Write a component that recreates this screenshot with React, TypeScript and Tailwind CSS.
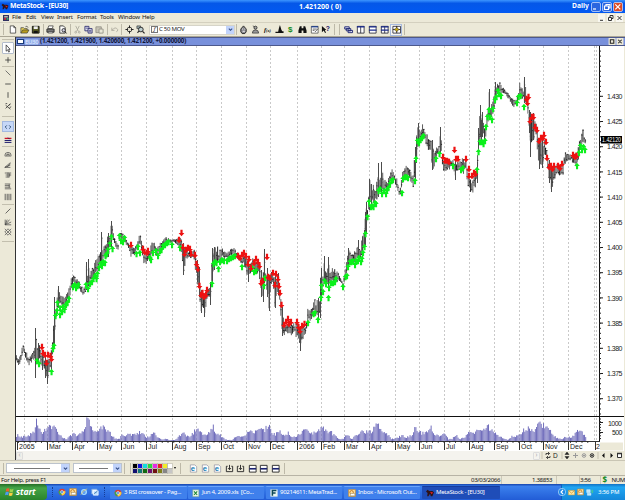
import React from "react";

/* ---------- chart data: [x, high, low] ---------- */
const PRICE: number[][] = [
  [16,353,360],[18,358,367],[20,356,364],[22,347,358],[23.5,343,353],[25,348,356],[27,352,363],[29,357,366],[31,352,364],[33,348,361],[35,346,362],[35.7,328,378],[36.6,345,362],[38,343,367],[40,345,364],[42,350,370],[44,354,372],[45.5,357,378],[47.2,360,384],[49,354,372],[51,351,373],[53,337,353],[54.6,297,345],[55.6,310,325],[57,298,313],[58.5,286,308],[61,294,308],[64,296,310],[67,293,305],[70,285,297],[72,273,290],[73.5,271,284],[76,277,287],[79,280,288],[81,286,293],[83.5,288,297],[85.5,283,292],[86.5,262,290],[87.5,278,288],[88.5,259,286],[89.5,275,284],[92,268,282],[95,262,278],[98,254,270],[100.5,250,266],[101.5,232,267],[102.5,248,262],[105,243,260],[108,233,257],[110,235,250],[111.5,221,247],[113,228,240],[114.6,237,244],[116,240,248],[118,244,252],[119.5,230,241],[122,231,240],[125,235,243],[128,242,248],[131,245,258],[134,248,257],[137,240,253],[139.5,233,246],[142,240,252],[143.8,250,267],[147,253,263],[150,248,260],[153.5,237,254],[157,247,257],[160,243,253],[163,240,248],[166,236,245],[170,239,243],[175,239,243],[180,237,248],[183.5,243,275],[186,248,261],[190,250,260],[194,248,260],[197,260,282],[199,267,297],[201,290,313],[203,292,306],[204.5,294,317],[207,290,303],[209,286,295],[210.5,282,305],[212,248,283],[214,247,270],[217.5,246,264],[219,252,264],[221.5,245,260],[225,251,260],[229,250,258],[233.5,246,256],[237,252,259],[240,255,262],[243,256,265],[246,255,270],[248,260,282],[250,259,278],[253,257,270],[256,262,276],[259,260,275],[261,270,297],[263,273,302],[264.5,249,283],[265.5,272,284],[267,268,297],[269.5,275,311],[271,272,286],[273,271,282],[275,272,308],[278,273,293],[280,288,307],[282,307,336],[285,322,335],[290,322,337],[294,322,332],[297,323,340],[300,327,351],[303,325,340],[306,324,335],[308,307,324],[311,309,320],[314,297,314],[316,302,315],[318,298,320],[320,296,318],[321,268,300],[323,275,288],[324.5,256,283],[326,276,290],[328.5,257,288],[330,273,286],[332,265,283],[336,270,283],[340,275,282],[343,282,287],[346,263,277],[348.5,248,268],[351,253,264],[353,252,263],[356,250,263],[358,240,260],[360,250,260],[362,237,258],[364,230,250],[365.5,212,245],[366.5,202,233],[368,205,222],[369.5,179,210],[371.5,184,207],[374,185,203],[376,188,202],[378.5,163,197],[380,182,193],[381.5,162,193],[384,178,190],[387,180,192],[390,173,187],[391.5,165,183],[394,173,182],[397,178,190],[399.5,192,197],[402,173,190],[403,168,183],[405.5,164,178],[409,168,178],[412,173,187],[413.5,175,188],[415,147,180],[416.3,137,163],[418.5,123,143],[420,128,140],[422,123,140],[425,130,142],[428,135,150],[431,137,153],[432.5,140,170],[434,153,172],[437,146,157],[439,143,154],[440.5,127,153],[442,148,160],[443,157,173],[446,158,173],[449,158,170],[452,158,168],[455,160,180],[456.5,163,173],[460,158,170],[463,158,175],[466,157,172],[468,172,190],[470,177,193],[472,178,195],[475,172,190],[477,162,183],[478.5,128,150],[480.5,105,137],[481.5,120,140],[482.5,112,137],[485,125,142],[488,107,125],[489.5,89,120],[490.5,105,118],[492,103,117],[494,95,110],[495.5,82,103],[497,84,97],[499.5,80,93],[502,85,95],[506,90,95],[510,95,102],[514,100,108],[516,98,106],[518,93,103],[519.5,82,98],[522,88,99],[523.5,90,100],[524.5,77,103],[527,97,110],[529.5,110,133],[530.8,112,157],[533,113,140],[536,120,138],[539,138,169],[542,139,168],[545,140,158],[547,150,162],[549,160,183],[551.5,166,192],[554,165,183],[557,164,175],[560,163,176],[563,162,181],[564.5,150,167],[568,153,163],[571,154,161],[574,153,166],[577,152,168],[579,140,157],[580.5,136,152],[582.5,126,143],[584,134,145],[586,136,148],
];

/* ---------- volume: [x, height] ---------- */
const VOLUME: number[][] = [
  [16,3],[17.5,8],[20,4],[24,5],[27,4],[31,8],[34,10],[36.5,21],[38,14],[42,8],[46,13],[49.5,17],[52,12],[55,17],[58,9],[62,4],[66,2],[70,5],[73,9],[77,5],[80,8],[84,14],[86,20],[88.5,22],[91,13],[94,8],[97,12],[100,12],[103,15],[106,12],[110,8],[114,3],[119,2],[122,7],[125,4],[129,8],[133,6],[138,9],[143,9],[145,4],[149,4],[153,9],[157,4],[161,2],[166,2],[170,1],[175,1],[180,6],[183,10],[186,5],[190,5],[194,10],[198,12],[202,7],[206,8],[210,10],[212.5,16],[215,8],[219,7],[223,3],[227,1],[232,1],[236,5],[241,4],[245,6],[248,9],[252,11],[256,9],[260,12],[264,11],[268,18],[271,9],[275,7],[280,10],[284,5],[288,9],[292,4],[297,6],[301,9],[305,11],[310,9],[315,8],[319,12],[321.5,17],[325,11],[330,10],[334,6],[338,2],[343,2],[347,8],[351,2],[356,6],[360,10],[365,10],[369,9],[373,12],[376,18],[379,14],[382,9],[387,8],[391,2],[396,3],[402,6],[405,3],[409,5],[413,7],[415,15],[419,9],[424,8],[428,11],[431,14],[435,7],[440,5],[444,8],[448,2],[452,2],[455,7],[459,2],[464,4],[469,9],[474,9],[478,11],[482,11],[486,17],[490,13],[494,10],[498,5],[503,3],[507,1],[512,5],[516,5],[520,7],[524,12],[529,15],[533,10],[537,16],[541,17],[545,14],[549,12],[553,6],[557,3],[561,2],[565,4],[569,4],[573,5],[577,10],[581,12],[584,6],[586,3],
];

const BUY: number[][] = [
  [37,361],[39,364],[51.5,372],[53,349],[54,346],[55.5,316],[57,311],[57.5,303],[60,315],[60,308],[62,312],[63,307],[64.5,310],[66,305],[67.5,303],[69,299],[73,287],[74.5,285],[76,288],[77.5,286],[78.5,285],[86,285],[88,289],[90,284],[92,282],[93.5,279],[95,276],[96.5,279],[97.5,274],[99,268],[100.5,264],[102,266],[103,262],[105,263],[105.5,256],[107,254],[108,250],[110,244],[111.5,237],[112.5,249],[119.5,236],[121,241],[123,242],[124.5,238],[136.5,254],[138,247],[140,253],[150,258],[151,260],[153,253],[156,251],[158,256],[160,251],[161.5,250],[163,246],[165,245],[167,243],[168.5,242],[172,245],[180,248],[212,284],[213.5,264],[215,262],[216.5,263],[218.5,269],[220,262],[222,260],[224,261],[227,261],[229,259],[231,258],[233,257],[235,256],[242,267],[252,268],[254,272],[256,271],[264,286],[265,278],[308,323],[313.5,314],[315,313],[318,320],[321,298],[321.5,286],[323,292],[324.5,281],[326,284],[328.5,298],[329,288],[331,283],[333,283],[335,282],[336,279],[343,287],[345.5,277],[347,276],[348,267],[350,262],[351.5,262],[353,261],[355,265],[356,261],[358,261],[359,258],[361,262],[362,259],[363,253],[364.5,247],[365.5,234],[367.5,217],[369,202],[371,207],[372,206],[373.5,207],[375,203],[376,204],[378.5,191],[380,189],[382,194],[384,191],[386,194],[387,190],[388.5,188],[390,184],[391.5,181],[393,180],[402,193],[403,179],[405,177],[406.5,177],[408,178],[415,181],[416,159],[417.5,141],[419,143],[420.5,140],[422,138],[423.5,136],[436,159],[439.5,154],[453,166],[461,170],[463,168],[477,170],[478.5,152],[480,142],[482,142],[483.5,144],[485,141],[486,127],[487.5,117],[489,110],[490,117],[492,120],[493,109],[495,100],[496.5,97],[498,91],[499,94],[501,96],[517,103],[518.5,97],[520.5,96],[524,107],[577,166],[579,153],[580.5,146],[582,150],[583.5,147],[585,150],
];

const SELL: number[][] = [
  [42,347],[43,353],[45,355],[46.5,363],[48,355],[50.5,356],[51.5,359],[131,245],[143,249],[144.5,252],[147,253],[148,251],[179,240],[181.5,233],[183,247],[184.5,254],[186,250],[188,248],[190,249],[191,254],[195,255],[196.5,264],[198,269],[199.5,286],[201,295],[202.5,293],[204,297],[206,295],[207,290],[238,256],[240,258],[242,255],[244,253],[246,256],[248,264],[249,259],[251,268],[254,263],[256,259],[258,262],[259.5,266],[261,283],[262.5,281],[267,257],[268,277],[270,278],[273,273],[275,285],[276,274],[278,279],[279,286],[280,293],[281.5,305],[284,325],[286,322],[288,319],[289,324],[291,322],[297,322],[298.5,327],[300,331],[302,326],[304.5,324],[443,157],[445,161],[447,161],[449,162],[454.5,150],[456,159],[458,159],[466,159],[469,169],[469,176],[472,176],[474,173],[475.5,174],[526.5,99],[527.5,103],[528.5,97],[530,121],[532,117],[533.5,117],[535,127],[537,130],[539,141],[541,138],[543,138],[544,135],[546,142],[547,158],[549,167],[551,166],[552.5,169],[554,166],[558,166],[560,168],[562,164],[573,155],[575,157],[576.5,156],
];

const MONTHS: [number, string][] = [
  [17,"2065"],[47,"Mar"],[72,"Apr"],[97,"May"],[121,"Jun"],[146,"Jul"],[172,"Aug"],[196,"Sep"],[221,"Oct"],[246,"Nov"],[270,"Dec"],[297,"2066"],[321,"Feb"],[344,"Mar"],[369,"Apr"],[395,"May"],[419,"Jun"],[444,"Jul"],[469,"Aug"],[494,"Sep"],[519,"Oct"],[543,"Nov"],[568,"Dec"],[595,"2"],
];
const GRID = [24,47,72,97,121,146,172,196,221,246,270,297,321,344,369,395,419,444,469,494,519,543,568,594,596];

const rand = (n: number) => {
  const v = Math.sin(n * 127.1 + 11.7) * 43758.5453;
  return v - Math.floor(v);
};

function sample(points: number[][], x: number): number[] {
  let i = 0;
  while (i < points.length - 2 && points[i + 1][0] < x) i++;
  const a = points[i];
  const b = points[i + 1];
  const t = Math.max(0, Math.min(1, (x - a[0]) / (b[0] - a[0])));
  return a.slice(1).map((v, k) => v + (b[k + 1] - v) * t);
}

function Chart() {
  const bars: React.ReactNode[] = [];
  const vols: React.ReactNode[] = [];
  for (let i = 0; i < 487; i++) {
    const x = 16.2 + i * 1.171;
    const [h, l] = sample(PRICE, x);
    const range = l - h;
    const top = h + rand(i) * range * 0.34;
    const bot = l - rand(i + 900) * range * 0.34;
    bars.push(<path key={i} d={`M${x} ${top}V${bot}`} stroke={i % 4 === 0 ? "#262626" : "#5c5c5c"} strokeWidth="1" />);
    bars.push(<path key={"c" + i} d={`M${x - 0.4} ${top + (bot - top) * rand(i + 50)}h1.2`} stroke="#111" strokeWidth=".8" />);
    const [v] = sample(VOLUME, x);
    const vh = Math.max(1, v * (0.72 + rand(i + 300) * 0.45));
    vols.push(<path key={i} d={`M${x + 0.4} ${441 - vh}V441`} stroke="#716ebc" strokeWidth="1" />);
  }
  const spikes = PRICE.filter((p) => p[2] - p[1] > 19);
  const ticks: React.ReactNode[] = [];
  for (let i = 0; i < 73; i++) {
    const y = 51.1 + i * 5.04;
    if (y < 414) ticks.push(<path key={i} d={`M599 ${y}h2`} stroke="#222" strokeWidth="1" />);
  }
  return (
    <svg className="block h-[405px] w-[609px] shrink-0" viewBox="16 46 609 405" fontFamily="'Liberation Sans', Arial, sans-serif">
      <rect x="16" y="46" width="609" height="405" fill="#fff" />
      <g stroke="#c9c9c9" strokeWidth="1" strokeDasharray="2 2">
        {GRID.map((x) => <path key={x} d={`M${x + 0.5} 46V441`} />)}
      </g>
      <g>{bars}</g>
      <g stroke="#4c4c4c" strokeWidth="1">
        {spikes.map((p, i) => <path key={i} d={`M${Math.floor(p[0]) + 0.5} ${p[1]}V${p[2]}`} />)}
      </g>
      <g fill="#0bf01b">
        {BUY.map(([x, y], i) => <path key={i} d={`M${x} ${y - 3.2}l2.8 3.3h-1.7v3.2h-2.1v-3.2h-1.8z`} />)}
      </g>
      <g fill="#ed1111">
        {SELL.map(([x, y], i) => <path key={i} d={`M${x} ${y + 3.3}l2.9-3.4h-1.8v-3.1h-2.2v3.1h-1.8z`} />)}
      </g>
      <g>{vols}</g>
      <path d="M16 416.5H624M599.5 46V441" stroke="#111" strokeWidth="1" />
      <path d="M16 441.5H600" stroke="#333" strokeWidth="1" />
      {ticks}
      <g stroke="#222" strokeWidth="1">
        {Array.from({ length: 8 }, (_, i) => <path key={i} d={`M599 ${419 + i * 2.8}h2`} />)}
        <path d="M599 422.5h4M599 432.5h4" />
        {Array.from({ length: 100 }, (_, i) => <path key={"w" + i} d={`M${18.5 + i * 5.75} 441v2`} strokeWidth=".8" />)}
      </g>
      <g fontSize="7" fill="#222">
        {Array.from({ length: 13 }, (_, i) => {
          const y = 96.3 + i * 25.2;
          return (
            <g key={i}>
              <path d={`M599 ${y}h4`} stroke="#222" strokeWidth="1" />
              <text x="607" y={y + 2.7} textLength="15.5">{(1.43 - i * 0.005).toFixed(3)}</text>
            </g>
          );
        })}
        <text x="608" y="425.5" textLength="14">1000</text>
        <text x="612" y="435" textLength="10.5">500</text>
        <rect x="601" y="136" width="21" height="7.5" fill="#000" />
        <text x="602" y="142.3" fontSize="6.6" textLength="19" lengthAdjust="spacingAndGlyphs" fill="#fff">1.42120</text>
      </g>
      <g fontSize="7" fill="#222">
        {MONTHS.map(([x, label]) => (
          <g key={x}>
            <path d={`M${x + 0.5} 441v9`} stroke="#333" strokeWidth="1" />
            <text x={x + (label === "2" ? 1 : 2)} y="449.4">{label}</text>
          </g>
        ))}
      </g>
      <path d="M600 442.5h23v8h-23z" fill="#ece9d8" />
      <path d="M624 46h1v405h-1z" fill="#ece9d8" />
    </svg>
  );
}

/* ---------- 10×10 toolbar glyphs ---------- */
const GLYPHS: Record<string, React.ReactNode> = {
  page: <path d="M2.5 1h4l2 2v6h-6zM6.5 1v2h2" fill="#fff" stroke="#333" strokeWidth=".8" />,
  open: <><path d="M1 9V3h3l1 1h3v2" fill="#e8d458" stroke="#444" strokeWidth=".8" /><path d="M1 9l2-3.5h7L8 9z" fill="#b99c1c" stroke="#333" strokeWidth=".7" /><path d="M6 2q2-2 3 1" stroke="#333" fill="none" strokeWidth=".7" /></>,
  save: <><path d="M1.5 1.5h7.5v7.5h-7.5z" fill="#555a20" stroke="#111" /><path d="M3 1.5h4.5v3H3z" fill="#eee" /><path d="M3 6.5h4.5V9H3z" fill="#111" /></>,
  print: <><path d="M3 1h5l-1 3H2z" fill="#fff" stroke="#333" strokeWidth=".8" /><path d="M1 4.5h8v3.5H1z" fill="#777" stroke="#222" strokeWidth=".9" /><path d="M2.5 7.5h5V9h-5z" fill="#ddd" stroke="#222" strokeWidth=".6" /></>,
  preview: <><path d="M2 1h4l2 2v6H2z" fill="#fff" stroke="#222" strokeWidth=".9" /><circle cx="6.3" cy="5.8" r="1.9" fill="#ccd" stroke="#222" strokeWidth=".9" /><path d="M7.6 7.2L9.5 9.4" stroke="#222" /></>,
  cut: <path d="M3 1l3 6M7 1L4 7M3 7a1 1 0 100 2 1 1 0 000-2M7 7a1 1 0 100 2 1 1 0 000-2" fill="none" stroke="#aaa79b" strokeWidth=".9" />,
  copy: <><path d="M1 1.5h4.5v5H1z" fill="#dde" stroke="#226" strokeWidth=".9" /><path d="M4.5 4h4.5v5H4.5z" fill="#dde" stroke="#226" strokeWidth=".9" /><path d="M2 3.5h2.5M5.5 6h2.5M5.5 7.5h2.5" stroke="#226" strokeWidth=".7" /></>,
  paste: <><path d="M1 2h6v6.5H1z" fill="#c5c2b5" stroke="#929085" strokeWidth=".9" /><path d="M4.5 4.5H9V9H4.5z" fill="#ece9d8" stroke="#929085" strokeWidth=".9" /></>,
  undo: <path d="M2 3v3h3M2 6q4-5 6.5-1Q9 7 7 7.5" fill="none" stroke="#aaa79b" strokeWidth=".9" />,
  target: <><circle cx="5" cy="5" r="2.6" fill="none" stroke="#222" strokeWidth=".9" /><path d="M5 .5v3M5 6.5v3M.5 5h3M6.5 5h3" stroke="#222" strokeWidth="1.1" /></>,
  zoom: <><path d="M1 1h4v3H1z" fill="#9aa" stroke="#333" strokeWidth=".7" /><circle cx="5.4" cy="5" r="2.6" fill="#bcc" stroke="#222" /><path d="M7.3 7L9.5 9.3M1.5 8.5l2-1.5" stroke="#222" strokeWidth="1.3" /></>,
  explorer: <><path d="M2 4.500l3-3.500 3 3.500v3l-1.500 2h-3L2 7.500z" fill="#8a8a90" stroke="#222" /><path d="M3.500 4.500h1M6 4.500h1M4 7h2.500" stroke="#fff" strokeWidth=".9" fill="none" /></>,
  expert: <><circle cx="5" cy="3" r="1.7" fill="#aaa" stroke="#222" strokeWidth=".9" /><path d="M1.5 9q0-3.5 3.5-3.5T8.5 9zM2 1l2 1" fill="#999" stroke="#333" strokeWidth=".8" /></>,
  indicator: <text x="0" y="8" fontSize="7" fontStyle="italic" fontWeight="bold" fontFamily="Liberation Serif, serif">f<tspan fontSize="4.5">(x)</tspan></text>,
  wizard: <path d="M5.5 0l1.5 5 1 2h1.5v2H.5V7.5h3L4.5 3z" fill="#111" />,
  dollar: <text x="2.3" y="8.3" fontSize="9" fontWeight="bold" fill="#168a22" fontFamily="Liberation Sans, sans-serif">$</text>,
  find: <path d="M2 1.5h2v2h2v-2h2L9.5 6v3H6V6H4v3H.5V6z" fill="#111" />,
  report: <><path d="M1.5 1.5h7.5V9H1.5z" fill="#fff" stroke="#444" strokeWidth=".8" /><path d="M1.5 2h7.5" stroke="#138" strokeWidth="1.3" /><path d="M3 4.5h4.5M3 6h2M5.5 7.8L9 4" stroke="#333" strokeWidth=".8" /></>,
  help: <><path d="M1 1v7l2-1.8L4.5 9l1-.5L4.3 5.6H6z" fill="#111" /><text x="5.2" y="6.7" fontSize="7.5" fontWeight="bold" fill="#116" fontFamily="Liberation Sans, sans-serif">?</text></>,
  cascade: <path d="M.8 2h5v2.500H.8zM2.500 4h5v2.500h-5zM4.500 6h5v2.500h-5z" fill="#dde" stroke="#1a2270" strokeWidth="1" />,
  cols: <><path d="M1.5 1.5h7.5V9H1.5zM5.2 1.5V9" fill="#fff" stroke="#223" strokeWidth=".9" /><path d="M1 2h8.5" stroke="#1a2a8c" strokeWidth="1.5" /></>,
  rows: <><path d="M1.5 1.5h7.5V9H1.5z" fill="#fff" stroke="#223" strokeWidth=".9" /><path d="M1 2h8.5M1 5.7h8.5" stroke="#1a2a8c" strokeWidth="1.5" /></>,
  tiles: <><path d="M1.5 1.5h7.5V9H1.5zM5.2 1.5V9" fill="#fff" stroke="#223" strokeWidth=".9" /><path d="M1 2h8.5M1 5.7h8.5" stroke="#1a2a8c" strokeWidth="1.5" /></>,
  star: <><path d="M1 1.5h8.5V9H1zM5.2 1V9M1 5h8" fill="#fff" stroke="#223" strokeWidth=".9" /><path d="M5.2 2l1 2 2.200 1-2.200 1-1 2-1-2-2.200-1 2.200-1z" fill="#c9a912" stroke="#222" strokeWidth=".5" /></>,
  pointer: <path d="M3.5 1v7l1.7-1.5L6.3 9l1-.5L6.2 6H8z" fill="#fff" stroke="#222" strokeWidth=".8" />,
  plus: <path d="M5 1.5v7M1.5 5h7" stroke="#333" />,
  back: <path d="M2 2l6 6" stroke="#555" />,
  slash: <path d="M2 8l6-6" stroke="#444" />,
  horiz: <path d="M1.5 5h7" stroke="#333" />,
  vert: <path d="M5 1.5v7" stroke="#333" />,
  cross: <path d="M2 2h2M2 4l6 5M8 2L2 8M6 4l2-1M7 7l2-1" stroke="#333" fill="none" />,
  arrows: <path d="M3.5 3l-2 2 2 2M6.5 3l2 2-2 2" fill="none" stroke="#246" strokeWidth="1.1" />,
  flag: <><path d="M.8 3h8.500" stroke="#c12" strokeWidth="1.6" /><path d="M.8 5.600h8.500M.8 8h8.500" stroke="#116" strokeWidth="1.200" /><path d="M5 2l2 2" stroke="#116" /></>,
  arc: <path d="M1 7a4 4 0 018 0M3 7a2 2 0 014 0M1 7.5h8M5 5v2" fill="none" stroke="#444" strokeWidth=".9" />,
  fan: <path d="M1 8l7-6M1 8l7-3M1 8h7M4 7.5L8 3" stroke="#444" strokeWidth=".9" />,
  fib: <path d="M1 2.5h8M2 5h7M2 7.5h5M5 2v6M7 3v4" stroke="#444" strokeWidth=".9" />,
  fib2: <path d="M1 2.5h7M1 4.5h6M1 6.5h7M1 8.5h8M6.5 3v4" stroke="#444" strokeWidth=".9" />,
  zones: <path d="M1.5 1v8M4 1v8M6.2 1v8M8.5 1v8" stroke="#444" />,
  gann: <path d="M1.5 8.5V2M1.5 8.5L4 2M1.5 8.5L7 2M1.5 8.5L9 5M1.5 8.5H9" stroke="#444" strokeWidth=".9" />,
  mesh: <path d="M1 1l8 8M5 1l4 4M1 5l4 4M9 1L1 9M5 1L1 5M9 5L5 9" stroke="#555" strokeWidth=".9" />,
  web: <><path d="M1.5 1h5l2 2v6h-7z" fill="#fff" stroke="#889" strokeWidth=".7" /><text x="2" y="8.2" fontSize="8.5" fontWeight="bold" fill="#1680b4" fontFamily="Liberation Sans, sans-serif">e</text></>,
  down: <path d="M3 2.5H1.5v6h7v-6H7M5 1v5M3.3 4.5L5 6.3l1.7-1.8" fill="none" stroke="#222" strokeWidth="1" />,
  panel: <><path d="M1.5 1.5h7.5V9H1.5z" fill="#fff" stroke="#222" /><path d="M1.5 5.3h7.5" stroke="#1b2370" strokeWidth="1.8" /></>,
  chrome: <><circle cx="5" cy="5" r="4.2" fill="#df3b2e" /><path d="M5 5L1.3 3A4.2 4.2 0 004.5 9.2z" fill="#35a853" /><path d="M5 5L4.5 9.2A4.2 4.2 0 009 3.5z" fill="#fbce3c" /><circle cx="5" cy="5" r="1.8" fill="#3f80e0" stroke="#fff" strokeWidth=".7" /></>,
  outlook: <><path d="M.8.8h8.4v8.4H.8z" fill="#ffe4a3" stroke="#d88c1a" strokeWidth=".8" /><circle cx="4.5" cy="4.2" r="2.2" fill="none" stroke="#c26f10" strokeWidth="1.1" /><path d="M3 5.5h5.5v3H3z" fill="#fff" stroke="#8a7a50" strokeWidth=".6" /></>,
  ie: <><circle cx="5" cy="5" r="3" fill="none" stroke="#a6dcff" strokeWidth="1.5" /><path d="M2.5 5h5.5" stroke="#a6dcff" strokeWidth="1.1" /><path d="M1 8.5Q2 4 9 1" fill="none" stroke="#f4d05a" strokeWidth=".8" /></>,
  desk: <><path d="M1 1.5h6.5v6H1z" fill="#eaf4ff" stroke="#7ba8dd" /><path d="M3 3.5h6V9H3z" fill="#b8dcff" stroke="#fff" strokeWidth=".8" /><path d="M4 7l4-3" stroke="#28649f" /></>,
  excel: <><path d="M1 1h7.5v8.5H1z" fill="#eef8ee" stroke="#8bb08b" strokeWidth=".7" /><path d="M2.5 3l4 4.5M6.5 3l-4 4.5" stroke="#1f8734" strokeWidth="1.4" /></>,
  meta: <><path d="M.5.5h9v9h-9z" fill="#e9f4ee" /><path d="M3 8.5V2h5M3 5h4" stroke="#0d4858" strokeWidth="1.9" fill="none" /></>,
  bull: <><path d="M0 3l2-2 2 1.5h4L10 4 8 9H6L5 6 3 9H1.5L2 5z" fill="#301216" /><path d="M5 3.5l4 1-2 2z" fill="#df2424" /></>,
  app: <><path d="M0 0h10v10H0z" fill="#303060" /><path d="M2 2h6v2H2z" fill="#e4ddb8" /><path d="M2 5h3v3H2z" fill="#d3283f" /><path d="M6 5h3v3H6z" fill="#3cac68" /></>,
  mail: <><path d="M.5 2h9v6.5h-9z" fill="#ffe7a0" stroke="#d69b28" strokeWidth=".7" /><path d="M.5 2l4.5 4 4.500-4" fill="none" stroke="#ba7a17" strokeWidth=".8" /></>,
  net: <><path d="M1 1h5v4H1zM2 6h5v3H2z" fill="#b7e7ff" stroke="#fff" strokeWidth=".6" /><path d="M7.5 2q1 1.5 0 3M9 1q1.5 2.5 0 5" stroke="#5ae06d" fill="none" /></>,
};

function G({ n, s = "h-[10px] w-[10px]" }: { n: string; s?: string }) {
  return <svg viewBox="0 0 10 10" className={`${s} shrink-0 overflow-visible`}>{GLYPHS[n]}</svg>;
}

const Slot = ({ n, w = "w-[12px]" }: { n: string; w?: string }) => (
  <span className={`${w} flex h-full shrink-0 items-center justify-center`}><G n={n} s="h-[9px] w-[9px]" /></span>
);
const Sep = ({ w = "w-[4px]" }: { w?: string }) => (
  <span className={`${w} flex h-full shrink-0 items-center justify-center`}><span className="h-[11px] w-px bg-[#bdb9a8]" /></span>
);
const HSep = ({ h = "h-[5px]" }: { h?: string }) => (
  <span className={`${h} flex w-full shrink-0 items-center justify-center`}><span className="h-px w-[12px] bg-[#c3bfae]" /></span>
);
const Tool = ({ n, h = "h-[11px]" }: { n: string; h?: string }) => (
  <span className={`${h} flex w-full shrink-0 items-center justify-center`}><G n={n} s="h-[8px] w-[8px]" /></span>
);
const Drop = () => (
  <span className="flex h-[8px] w-[8px] shrink-0 items-center justify-center bg-[#c1d3fb]">
    <svg viewBox="0 0 6 6" className="h-[5px] w-[5px]"><path d="M1 2l2 2 2-2" fill="none" stroke="#344e86" strokeWidth="1.3" /></svg>
  </span>
);

function TitleBar() {
  return (
    <div className="flex h-[13px] shrink-0 items-center bg-linear-to-b from-[#3d95ff] via-[#0557e8] via-25% to-[#0259f2] font-bold text-white">
      <span className="flex w-[10px] shrink-0 justify-center"><G n="bull" s="h-[7px] w-[8px]" /></span>
      <span className="w-[289px] shrink-0 text-[6.9px] tracking-[-0.33px]">MetaStock - [EU30]</span>
      <span className="w-[273px] shrink-0 text-[7px]">1.421200 ( 0)</span>
      <span className="w-[19px] shrink-0 text-[6.7px]">Daily</span>
      <span className="flex gap-px">
        {["M2 7h3", "M2.5 4h4v3.5h-4zM4 4V2.5h4V6H6.5", "M2.3 2.3l5 5M7.3 2.3l-5 5"].map((d, i) => (
          <svg key={i} viewBox="0 0 10 10" className="h-[10px] w-[10px]">
            <rect x=".5" y=".5" width="9" height="9" rx="1.5" fill={i === 2 ? "#dd4b26" : "#2b66df"} stroke="#c6d8fb" strokeWidth=".8" />
            <path d={d} fill="none" stroke="#fff" strokeWidth="1.2" />
          </svg>
        ))}
      </span>
    </div>
  );
}

function MenuBar() {
  return (
    <div className="flex h-[10px] shrink-0 items-center border-b border-[#d4d0bf] text-[6.1px] tracking-[-0.2px] text-[#111]">
      <span className="flex w-[12px] justify-center"><G n="app" s="h-[8px] w-[6px]" /></span>
      <span className="w-[14px]">File</span>
      <span className="w-[15px]">Edit</span>
      <span className="w-[16px]">View</span>
      <span className="w-[20px]">Insert</span>
      <span className="w-[23px]">Format</span>
      <span className="w-[18px]">Tools</span>
      <span className="w-[24px]">Window</span>
      <span>Help</span>
      <svg viewBox="0 0 26 8" className="ml-auto mr-[1px] h-[8px] w-[26px]">
        <path d="M0 0h7v8H0zM9 0h7v8H9zM18 0h7v8h-7z" fill="#f8f7f0" />
        <path d="M2 6.3h3M10.5 3.5h3v3h-3zM12 3V1.5h3v3h-1M19.5 2l4 4M23.5 2l-4 4" fill="none" stroke="#333" strokeWidth="1" />
      </svg>
    </div>
  );
}

function ToolBar() {
  return (
    <div className="flex h-[14px] shrink-0 items-center border-b border-[#aaa695]">
      <Sep w="w-[6px]" /><Slot n="page" /><Slot n="open" /><Slot n="save" w="w-[11px]" /><Sep />
      <Slot n="print" w="w-[11px]" /><Slot n="preview" /><Sep /><Slot n="cut" w="w-[10px]" /><Slot n="copy" w="w-[12px]" /><Slot n="paste" w="w-[11px]" />
      <Sep /><Slot n="undo" w="w-[11px]" /><Sep w="w-[3px]" /><Slot n="target" w="w-[12px]" /><Slot n="zoom" w="w-[11px]" />
      <div className="ml-[3px] flex h-[10px] w-[86px] shrink-0 items-center border border-[#d6d4c8] bg-white text-[6.1px] tracking-[-0.3px] text-[#222]">
        <span className="ml-[1px] mr-[1px] flex h-[7px] w-[7px] items-center justify-center border border-[#777] font-serif text-[6px] italic">f</span>
        <span className="flex-1">C 50 MOV</span>
        <Drop />
      </div>
      <Sep w="w-[2px]" />
      <Slot n="explorer" w="w-[12px]" /><Slot n="expert" w="w-[13px]" /><Slot n="indicator" /><Slot n="wizard" w="w-[11px]" /><Slot n="dollar" w="w-[11px]" />
      <Slot n="find" /><Slot n="report" /><Slot n="help" w="w-[11px]" /><Sep w="w-[6px]" /><Sep w="w-[4px]" />
      <Slot n="cascade" w="w-[14px]" /><Slot n="cols" w="w-[11px]" /><Slot n="rows" /><Slot n="tiles" />
      <span className="flex h-[12px] w-[12px] items-center justify-center border border-[#a9bce0] bg-[#f6f6f2]"><G n="star" s="h-[9px] w-[9px]" /></span>
      <Sep w="w-[5px]" />
    </div>
  );
}

function SideBar() {
  return (
    <aside className="flex h-[423px] w-[15px] shrink-0 flex-col items-center bg-[#ece9d8]">
      <HSep h="h-[5px]" />
      <span className="flex h-[12px] w-[12px] shrink-0 items-center justify-center rounded-[1px] border border-[#b3bccb] bg-white"><G n="pointer" s="h-[9px] w-[9px]" /></span>
      <Tool n="plus" h="h-[11px]" /><HSep h="h-[3px]" />
      <Tool n="back" h="h-[10px]" /><Tool n="horiz" h="h-[11px]" /><Tool n="vert" h="h-[11px]" /><Tool n="cross" h="h-[11px]" />
      <HSep h="h-[10px]" />
      <span className="flex h-[11px] w-[12px] shrink-0 items-center justify-center border border-[#a3b9df] bg-[#c5d7f7]"><G n="arrows" s="h-[8px] w-[8px]" /></span>
      <span className="h-[2px] shrink-0" />
      <Tool n="flag" h="h-[11px]" /><HSep h="h-[3px]" />
      <Tool n="arc" h="h-[11px]" /><Tool n="fan" /><Tool n="fib" h="h-[10px]" /><Tool n="fib2" h="h-[11px]" /><Tool n="zones" h="h-[12px]" />
      <HSep h="h-[3px]" /><Tool n="slash" h="h-[10px]" /><Tool n="gann" /><Tool n="mesh" h="h-[10px]" /><HSep h="h-[8px]" />
    </aside>
  );
}

function ChartWindow() {
  return (
    <main className="flex h-[423px] min-w-0 flex-1 flex-col border-l border-[#333]">
      <div className="flex h-[9px] shrink-0 items-center border-y border-[#4c588c] bg-[#7890db] text-[6.2px] font-bold">
        <span className="ml-[1px] mr-[1px] h-[5px] w-[7px] shrink-0 border border-[#173a7a] bg-white" />
        <span className="mr-[2px] w-[13px] shrink-0 bg-[#93aeea] text-[6px] font-normal tracking-[-0.3px] text-[#e8efff]">EU30</span>
        <span className="tracking-[-0.15px] text-[#101638]">(1.421200, 1.421900, 1.420600, 1.421200, +0.000000)</span>
        <svg viewBox="0 0 17 8" className="ml-auto mr-[1px] h-[7px] w-[16px]">
          <path d="M0 0h8v8H0zM9 0h8v8H9z" fill="#ece9d8" />
          <path d="M2 2h4v4H2zM11 2l4 4M15 2l-4 4" fill="none" stroke="#222" strokeWidth="1.2" />
        </svg>
      </div>
      <Chart />
      <div className="flex h-[9px] shrink-0 items-center bg-[#f4f3ee] text-[6.5px] text-[#222]">
        <span className="flex h-[8px] w-[7px] items-center justify-center rounded-[1px] border border-[#ddd] bg-[#f0efe9] text-[#aaa]">‹</span>
        <span className="flex-1" />
        <span className="flex h-[8px] w-[7px] items-center justify-center rounded-[1px] border border-[#ddd] text-[#aaa]">›</span>
        <svg viewBox="0 0 85 9" className="h-[9px] w-[85px] bg-[#ece9d8]" fontFamily="Liberation Sans, sans-serif">
          <path d="M2 1v7M22 1v7M58 1v7" stroke="#c5c1b0" />
          <path d="M6 4V2.500h3.500M10 5v1.500H6.500M8 1l1.500 1.500L8 4M8 5L6.500 6.500 8 8" stroke="#222" fill="none" strokeWidth=".8" />
          <text x="13" y="7" fontSize="6.5" fill="#222">D</text>
          <path d="M27 1L29 3.500h-4zM27 8L29 5.500h-4z" fill="#222" stroke="#222" strokeWidth=".5" />
          <path d="M33 4.500h5M35.500 2v5" stroke="#999" />
          <circle cx="44" cy="4.500" r="1.800" fill="none" stroke="#999" /><path d="M43 4.500h2" stroke="#999" />
          <circle cx="52" cy="4.500" r="1.800" fill="none" stroke="#333" /><path d="M51 4.500h2M52 3.500v2" stroke="#333" strokeWidth=".8" />
          <path d="M64.500 2V7L62 4.500zM70.500 2V7L73 4.500z" fill="#111" />
          <path d="M77.500 2.500h4v4h-4z" fill="#fff" stroke="#333" /><path d="M77 2.500h5" stroke="#333" strokeWidth="1.500" />
        </svg>
      </div>
    </main>
  );
}

const PALETTE = [
  ["bg-[#000000]", "bg-[#1414d4]", "bg-[#14dcdc]", "bg-[#2ad83c]", "bg-[#e52be5]", "bg-[#e52323]", "bg-[#f0ec28]", "bg-[#ffffff]"],
  ["bg-[#101070]", "bg-[#127878]", "bg-[#126812]", "bg-[#701270]", "bg-[#701212]", "bg-[#80801c]", "bg-[#858585]", "bg-[#c6c6c6]"],
];

function LineBar() {
  return (
    <div className="flex h-[15px] shrink-0 items-center border-t border-[#c9c5b4]">
      <Sep w="w-[6px]" />
      <div className="flex h-[10px] w-[64px] items-center border border-[#bcc3cc] bg-white"><span className="ml-[7px] mr-[11px] h-px flex-1 bg-[#777]" /><Drop /></div>
      <div className="ml-[3px] flex h-[10px] w-[49px] items-center border border-[#bcc3cc] bg-white"><span className="ml-[5px] mr-[5px] h-px flex-1 bg-[#777]" /><Drop /></div>
      <Sep w="w-[5px]" /><Sep w="w-[6px]" />
      <div className="flex flex-col gap-px">
        {PALETTE.map((row, r) => (
          <div key={r} className="flex gap-px">{row.map((c) => <span key={c} className={`${c} h-[4px] w-[4px] outline-[0.5px] outline-[#8884]`} />)}</div>
        ))}
      </div>
      <span className="ml-[2px] mr-[2px] h-0 w-0 border-x-[1.5px] border-t-2 border-x-transparent border-t-black" />
      <Sep w="w-[5px]" />
      <span className="w-[5px]" />
      <Slot n="web" w="w-[11px]" /><Slot n="web" w="w-[12px]" /><Slot n="web" w="w-[12px]" /><Slot n="down" w="w-[12px]" />
      <Slot n="down" w="w-[11px]" /><Slot n="panel" /><Slot n="panel" w="w-[11px]" /><Slot n="panel" /><Sep w="w-[6px]" />
    </div>
  );
}

function StatusBar() {
  return (
    <div className="flex h-[9px] shrink-0 items-center border-t border-[#b7b3a5] bg-[#ece9d8] text-[6.1px] tracking-[-0.33px] text-[#111]">
      <span className="ml-[1px] w-[470px] shrink-0">For Help, press F1</span>
      <span className="h-full w-[31px] shrink-0 border-r border-[#ccc8b8] pt-[1px]">03/03/2066</span>
      <span className="w-[54px] shrink-0 pl-[30px]">1.38853</span>
      <span className="h-full w-[24px] shrink-0 border-l border-r border-[#ccc8b8]" />
      <span className="h-full w-[21px] shrink-0 border-r border-[#ccc8b8] pt-[1px]">3:56</span>
      <span className="w-[8px] text-center text-[8px] font-bold text-[#138a26]">$</span>
      <span className="pl-[3px]">NUM</span>
    </div>
  );
}

function Task({ n, w, label, active = false }: { n: string; w: string; label: string; active?: boolean }) {
  return (
    <span className={`${w} flex h-[13px] shrink-0 items-center gap-[2px] rounded-[1px] border-t pl-[4px] text-[6.1px] tracking-[-0.3px] text-white ${active ? "border-[#183d9e] bg-[#1f4db8]" : "border-[#69a4fb] bg-[#3f80ec]"}`}>
      <G n={n} s="h-[8px] w-[8px]" /><span className="whitespace-pre">{label}</span>
    </span>
  );
}

function TaskBar() {
  return (
    <div className="flex h-[16px] shrink-0 items-center bg-linear-to-b from-[#1743ab] via-[#3b80ed] via-15% to-[#225cd6]">
      <div className="flex h-[16px] w-[47px] shrink-0 items-center rounded-r-[4px] bg-linear-to-b from-[#236f25] via-[#45a547] via-25% to-[#2a842c] pl-[5px]">
        <svg viewBox="0 0 10 10" className="mr-[2px] h-[10px] w-[9px]">
          <path d="M1.5 1.500q2-1.500 3.500 0L4.300 4.600q-1.500-1-3.500 0z" fill="#ef5c2d" />
          <path d="M5.500 1.700q2 1 4-.2L8.800 4.800q-1.700 1-3.800 0z" fill="#9ed34d" />
          <path d="M.7 5.300q2-1 3.500 0L3.500 8.600q-1.500-1-3.500 0z" fill="#4b9cf2" />
          <path d="M4.900 5.600q2 1 3.800 0L8 9q-1.800 1-3.800 0z" fill="#fad041" />
        </svg>
        <span className="text-[8.6px] font-bold italic leading-none tracking-[-0.1px] text-white">start</span>
      </div>
      <span className="ml-[5px] h-[10px] border-l border-dotted border-[#163c96]" />
      <span className="ml-[5px] flex w-[46px] shrink-0 items-center gap-[3px]">
        <G n="chrome" s="h-[8px] w-[8px]" /><G n="outlook" s="h-[8px] w-[8px]" /><G n="ie" s="h-[8px] w-[8px]" /><G n="desk" s="h-[8px] w-[8px]" />
      </span>
      <span className="h-[10px] w-[6px] border-l border-dotted border-[#163c96]" />
      <Task n="chrome" w="w-[77px]" label="3 RSI crossover - Pag..." />
      <span className="w-[1px]" />
      <Task n="excel" w="w-[76px]" label="Jun 4, 2009.xls  [Co..." />
      <span className="w-[2px]" />
      <Task n="meta" w="w-[76px]" label="90214611: MetaTrad..." />
      <span className="w-[2px]" />
      <Task n="outlook" w="w-[76px]" label="Inbox - Microsoft Out..." />
      <span className="w-[2px]" />
      <Task n="bull" w="w-[78px]" label="MetaStock - [EU30]" active />
      <div className="ml-auto flex h-[16px] w-[64px] shrink-0 items-center gap-[2px] border-l border-[#0c62bf] bg-linear-to-b from-[#1371c4] via-[#20a6f2] via-20% to-[#1487da] text-[6px] tracking-[-0.2px] text-white">
        <svg viewBox="0 0 8 8" className="-ml-[4px] h-[8px] w-[8px]"><circle cx="4" cy="4" r="3.7" fill="#1d88e6" stroke="#d5efff" strokeWidth=".6" /><path d="M5 2L3 4l2 2" fill="none" stroke="#fff" strokeWidth="1.1" /></svg>
        <G n="mail" s="h-[7px] w-[7px]" /><G n="outlook" s="h-[8px] w-[7px]" /><G n="net" s="h-[7px] w-[7px]" />
        <span className="ml-[3px]">3:56 PM</span>
      </div>
    </div>
  );
}

export default function App() {
  return (
    <div className="flex h-[500px] w-[625px] flex-col overflow-hidden whitespace-nowrap bg-[#ece9d8] font-['Noto_Sans','Open_Sans',sans-serif] leading-none">
      <TitleBar />
      <MenuBar />
      <ToolBar />
      <div className="flex h-[423px] shrink-0">
        <SideBar />
        <ChartWindow />
      </div>
      <LineBar />
      <StatusBar />
      <TaskBar />
    </div>
  );
}
